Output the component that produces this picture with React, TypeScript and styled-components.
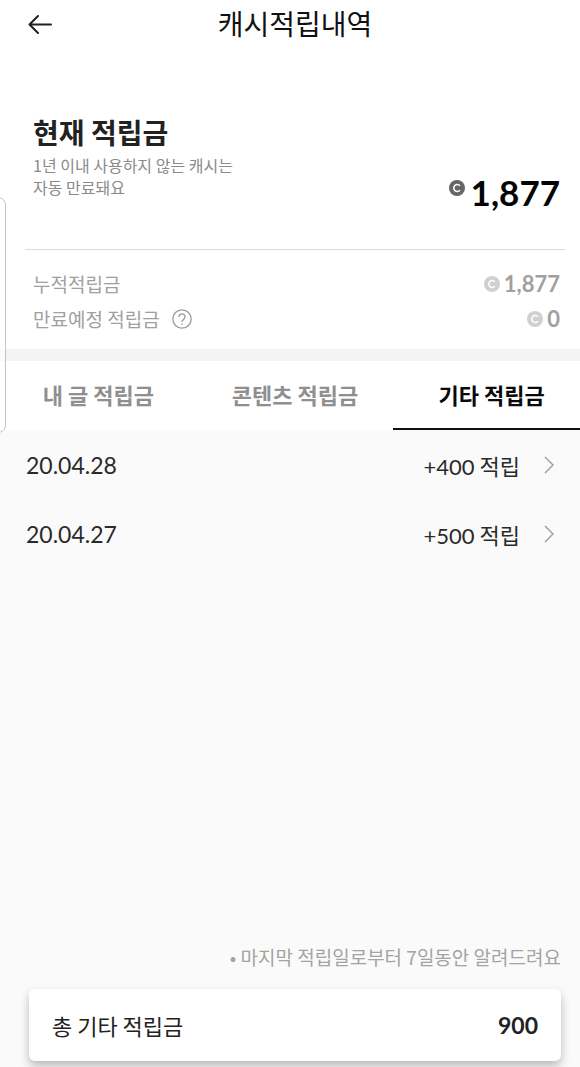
import React from 'react';
import styled, { createGlobalStyle } from 'styled-components';

const korean = '"Noto Sans CJK KR", "Noto Sans", sans-serif';
const numeric = 'Lato, "Noto Sans CJK KR", sans-serif';

const GlobalStyle = createGlobalStyle`
  *, *::before, *::after { box-sizing: border-box; }
  body { margin: 0; background: #fafafa; font-family: ${korean}; color: #222; overflow-x: hidden; }
  h1, h2, p, dl, dd, ul { margin: 0; padding: 0; }
  button { border: 0; padding: 0; background: none; font: inherit; color: inherit; cursor: pointer; }
`;

const Viewport = styled.div`
  position: relative;
  overflow: hidden;
`;

const Page = styled.div`
  display: flex;
  flex-direction: column;
  min-height: 100vh;
  margin-right: -10px;
`;

const Header = styled.header`
  display: grid;
  grid-template-columns: 28px 1fr 28px;
  align-items: center;
  height: 48px;
  padding: 0 26px;
  background: #fff;
`;

const IconButton = styled.button`
  display: flex;
  align-items: center;
  justify-content: center;
`;

const Title = styled.h1`
  padding-bottom: 2px;
  font-size: 28px;
  font-weight: 400;
  line-height: 46px;
  text-align: center;
  color: #111;
`;

const Summary = styled.section`
  padding: 62px 25px 13px;
  background: #fff;
  border-bottom: 12px solid #f3f3f3;
`;

const Balance = styled.div`
  display: flex;
  justify-content: space-between;
  padding: 0 5px 39px 8px;
  border-bottom: 1px solid #dcdcdc;
`;

const Heading = styled.h2`
  font-size: 28px;
  font-weight: 700;
  line-height: 44px;
`;

const Hint = styled.p`
  padding-bottom: 12px;
  font-size: 16px;
  line-height: 22px;
  color: #8a8a8a;
`;

const Amount = styled.span<{ $large?: boolean }>`
  display: flex;
  align-items: ${(p) => (p.$large ? 'flex-start' : 'center')};
  gap: ${(p) => (p.$large ? 6 : 4)}px;
  font-family: ${numeric};
  font-size: ${(p) => (p.$large ? 35 : 22)}px;
  line-height: ${(p) => (p.$large ? 36 : 35)}px;
  font-weight: 700;
  color: ${(p) => (p.$large ? '#050505' : '#a0a0a0')};
  align-self: ${(p) => (p.$large ? 'flex-end' : 'center')};
  svg { margin-top: ${(p) => (p.$large ? 6 : 0)}px; }
`;

const Totals = styled.dl`
  padding: 16px 5px 0 8px;
`;

const TotalRow = styled.div`
  display: flex;
  justify-content: space-between;
  font-size: 19px;
  line-height: 35px;
  color: #a0a0a0;
`;

const TotalLabel = styled.dt`
  display: flex;
  align-items: center;
  gap: 12px;
`;

const Tabs = styled.div`
  display: grid;
  grid-template-columns: repeat(3, 1fr);
  background: #fff;
`;

const Tab = styled.button<{ $active?: boolean }>`
  height: 69px;
  padding-bottom: 2px;
  font-size: 22px;
  font-weight: 700;
  line-height: 64px;
  color: ${(p) => (p.$active ? '#0a0a0a' : '#8f8f8f')};
  border-bottom: 2px solid ${(p) => (p.$active ? '#111' : 'transparent')};
`;

const History = styled.ul`
  flex: 1;
  list-style: none;
`;

const Entry = styled.button`
  display: flex;
  align-items: center;
  width: 100%;
  height: 69px;
  padding: 0 36px 0 26px;
  font-size: 22px;
  color: #2a2a2a;
`;

const Figure = styled.span<{ $bold?: boolean }>`
  font-family: ${numeric};
  font-size: 23px;
  font-weight: ${(p) => (p.$bold ? 700 : 400)};
`;

const Earned = styled.span`
  margin: 0 24px 0 auto;

  ${Figure} {
    font-size: 22px;
  }
`;

const Footer = styled.footer`
  padding: 0 29px 6px;
`;

const Note = styled.p`
  font-size: 19px;
  line-height: 28px;
  text-align: right;
  color: #a3a3a3;
  margin-bottom: 18px;
`;

const TotalCard = styled.div`
  display: flex;
  align-items: center;
  justify-content: space-between;
  height: 72px;
  padding: 0 23px;
  border-radius: 6px;
  background: #fff;
  box-shadow: 0 5px 10px rgba(0, 0, 0, 0.26);
  font-size: 22px;
`;

const EdgeHandle = styled.div`
  position: absolute;
  top: 197px;
  left: -20px;
  width: 26px;
  height: 236px;
  border: 1px solid #c4c4c4;
  border-radius: 8px;
  background: rgba(255, 255, 255, 0.6);
`;

const BackIcon = () => (
  <svg width="24" height="20" viewBox="0 0 24 20" fill="none" stroke="#222" strokeWidth="2" strokeLinecap="round" strokeLinejoin="round">
    <path d="M23 10.500H1.500M10 2L1.500 10.500l8.500 8.500" />
  </svg>
);

const CoinIcon = ({ color }: { color: string }) => (
  <svg width="16" height="16" viewBox="0 0 16 16" fill="none">
    <circle cx="8" cy="8" r="8" fill={color} />
    <path d="M10.900 5.700A3.500 3.500 0 1 0 10.900 10.300" stroke="#fff" strokeWidth="1.600" />
  </svg>
);

const HelpIcon = () => (
  <svg width="20" height="20" viewBox="0 0 20 20" fill="none" stroke="#9a9a9a" strokeWidth="1.3">
    <circle cx="10" cy="10" r="9.2" />
    <path d="M7 8a3 3 0 1 1 4.8 2.3C10.6 11.200 10 11.600 10 13" />
    <circle cx="10" cy="15.200" r="0.500" fill="#9a9a9a" strokeWidth="0.600" />
  </svg>
);

const ChevronIcon = () => (
  <svg width="10" height="18" viewBox="0 0 10 18" fill="none" stroke="#a0a0a0" strokeWidth="1.500">
    <path d="M1 1l8 8-8 8" />
  </svg>
);

const tabs = ['내 글 적립금', '콘텐츠 적립금', '기타 적립금'];
const entries = [
  { date: '20.04.28', amount: '+400' },
  { date: '20.04.27', amount: '+500' },
];

export default function App() {
  const [active, setActive] = React.useState(2);
  return (
    <Viewport>
      <GlobalStyle />
      <Page>
        <Header>
          <IconButton aria-label="뒤로"><BackIcon /></IconButton>
          <Title>캐시적립내역</Title>
        </Header>
        <Summary>
          <Balance>
            <div>
              <Heading>현재 적립금</Heading>
              <Hint>1년 이내 사용하지 않는 캐시는<br />자동 만료돼요</Hint>
            </div>
            <Amount $large><CoinIcon color="#666" />1,877</Amount>
          </Balance>
          <Totals>
            <TotalRow>
              <TotalLabel>누적적립금</TotalLabel>
              <dd><Amount><CoinIcon color="#d0d0d0" />1,877</Amount></dd>
            </TotalRow>
            <TotalRow>
              <TotalLabel>만료예정 적립금<IconButton aria-label="도움말"><HelpIcon /></IconButton></TotalLabel>
              <dd><Amount><CoinIcon color="#d0d0d0" />0</Amount></dd>
            </TotalRow>
          </Totals>
        </Summary>
        <Tabs role="tablist">
          {tabs.map((label, i) => (
            <Tab key={label} role="tab" aria-selected={i === active} $active={i === active} onClick={() => setActive(i)}>
              {label}
            </Tab>
          ))}
        </Tabs>
        <History>
          {entries.map((e) => (
            <li key={e.date}>
              <Entry>
                <Figure>{e.date}</Figure>
                <Earned><Figure>{e.amount}</Figure> 적립</Earned>
                <ChevronIcon />
              </Entry>
            </li>
          ))}
        </History>
        <Footer>
          <Note>• 마지막 적립일로부터 7일동안 알려드려요</Note>
          <TotalCard>
            <span>총 기타 적립금</span>
            <Figure $bold>900</Figure>
          </TotalCard>
        </Footer>
      </Page>
      <EdgeHandle />
    </Viewport>
  );
}
